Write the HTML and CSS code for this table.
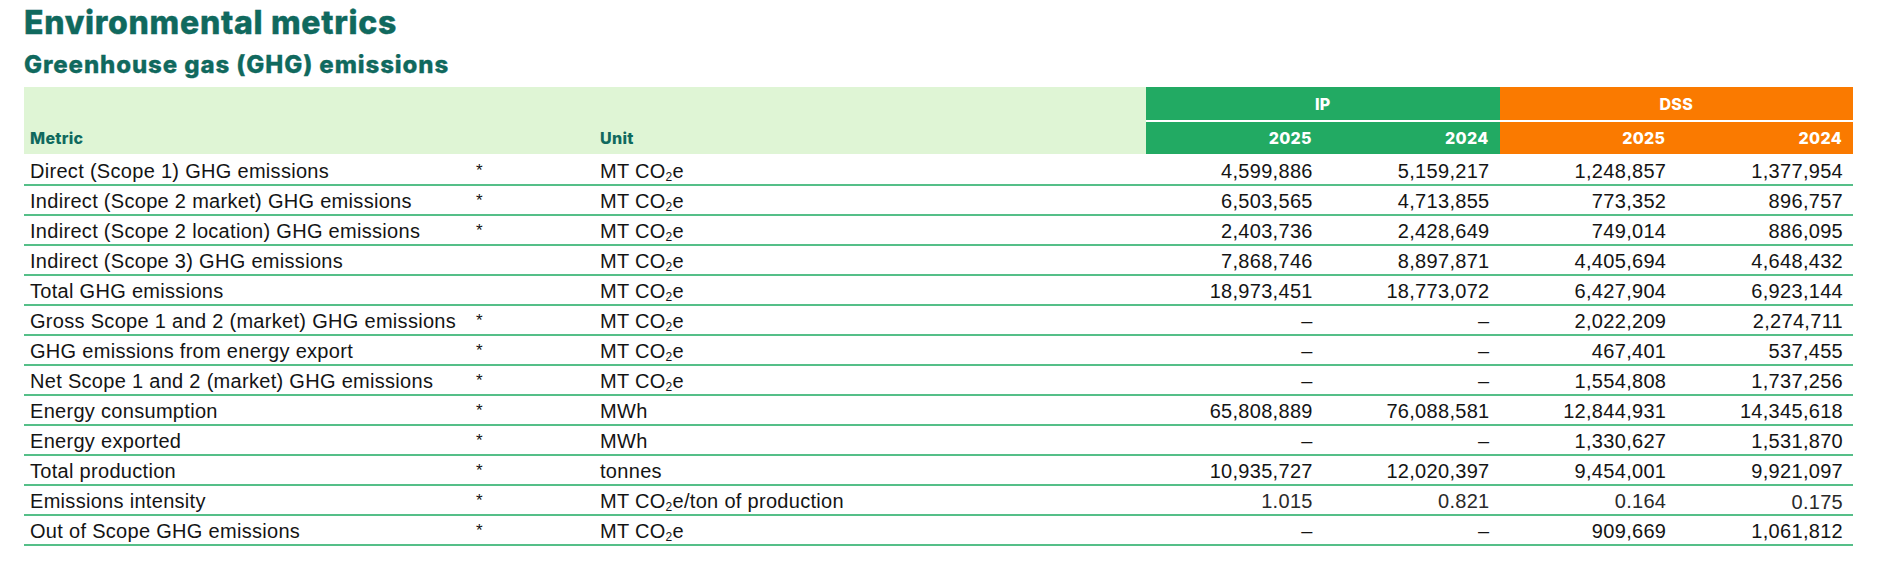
FILE: index.html
```html
<!DOCTYPE html>
<html lang="en">
<head>
<meta charset="utf-8">
<title>Environmental metrics</title>
<link rel="stylesheet" href="styles.css">
</head>
<body>
<main class="page">
  <h1 class="title">Environmental metrics</h1>
  <h2 class="subtitle">Greenhouse gas (GHG) emissions</h2>
  <table class="metrics">
    <colgroup>
      <col class="c-metric">
      <col class="c-star">
      <col class="c-unit">
      <col class="c-val">
      <col class="c-val">
      <col class="c-val">
      <col class="c-val">
    </colgroup>
    <thead>
      <tr class="group-row">
        <th class="lead" colspan="3"></th>
        <th class="grp ip" colspan="2">IP</th>
        <th class="grp dss" colspan="2">DSS</th>
      </tr>
      <tr class="year-row">
        <th class="lead label">Metric</th>
        <th class="lead"></th>
        <th class="lead label">Unit</th>
        <th class="year ip">2025</th>
        <th class="year ip">2024</th>
        <th class="year dss">2025</th>
        <th class="year dss">2024</th>
      </tr>
    </thead>
    <tbody>
      <tr class="first"><td class="m">Direct (Scope 1) GHG emissions</td><td class="s">*</td><td class="u">MT CO<sub>2</sub>e</td><td class="n">4,599,886</td><td class="n">5,159,217</td><td class="n">1,248,857</td><td class="n">1,377,954</td></tr>
      <tr><td class="m">Indirect (Scope 2 market) GHG emissions</td><td class="s">*</td><td class="u">MT CO<sub>2</sub>e</td><td class="n">6,503,565</td><td class="n">4,713,855</td><td class="n">773,352</td><td class="n">896,757</td></tr>
      <tr><td class="m">Indirect (Scope 2 location) GHG emissions</td><td class="s">*</td><td class="u">MT CO<sub>2</sub>e</td><td class="n">2,403,736</td><td class="n">2,428,649</td><td class="n">749,014</td><td class="n">886,095</td></tr>
      <tr><td class="m">Indirect (Scope 3) GHG emissions</td><td class="s"></td><td class="u">MT CO<sub>2</sub>e</td><td class="n">7,868,746</td><td class="n">8,897,871</td><td class="n">4,405,694</td><td class="n">4,648,432</td></tr>
      <tr><td class="m">Total GHG emissions</td><td class="s"></td><td class="u">MT CO<sub>2</sub>e</td><td class="n">18,973,451</td><td class="n">18,773,072</td><td class="n">6,427,904</td><td class="n">6,923,144</td></tr>
      <tr><td class="m">Gross Scope 1 and 2 (market) GHG emissions</td><td class="s">*</td><td class="u">MT CO<sub>2</sub>e</td><td class="n">–</td><td class="n">–</td><td class="n">2,022,209</td><td class="n">2,274,711</td></tr>
      <tr><td class="m">GHG emissions from energy export</td><td class="s">*</td><td class="u">MT CO<sub>2</sub>e</td><td class="n">–</td><td class="n">–</td><td class="n">467,401</td><td class="n">537,455</td></tr>
      <tr><td class="m">Net Scope 1 and 2 (market) GHG emissions</td><td class="s">*</td><td class="u">MT CO<sub>2</sub>e</td><td class="n">–</td><td class="n">–</td><td class="n">1,554,808</td><td class="n">1,737,256</td></tr>
      <tr><td class="m">Energy consumption</td><td class="s">*</td><td class="u">MWh</td><td class="n">65,808,889</td><td class="n">76,088,581</td><td class="n">12,844,931</td><td class="n">14,345,618</td></tr>
      <tr><td class="m">Energy exported</td><td class="s">*</td><td class="u">MWh</td><td class="n">–</td><td class="n">–</td><td class="n">1,330,627</td><td class="n">1,531,870</td></tr>
      <tr><td class="m">Total production</td><td class="s">*</td><td class="u">tonnes</td><td class="n">10,935,727</td><td class="n">12,020,397</td><td class="n">9,454,001</td><td class="n">9,921,097</td></tr>
      <tr><td class="m">Emissions intensity</td><td class="s">*</td><td class="u">MT CO<sub>2</sub>e/ton of production</td><td class="n ratio">1.015</td><td class="n ratio">0.821</td><td class="n ratio">0.164</td><td class="n ratio low">0.175</td></tr>
      <tr><td class="m">Out of Scope GHG emissions</td><td class="s">*</td><td class="u">MT CO<sub>2</sub>e</td><td class="n">–</td><td class="n">–</td><td class="n">909,669</td><td class="n">1,061,812</td></tr>
    </tbody>
  </table>
</main>
</body>
</html>
```

FILE: styles.css
```css
html, body {
  margin: 0;
  padding: 0;
  background: #ffffff;
}

.page {
  padding: 0 27px 0 24px;
}

.title {
  margin: 0;
  padding-top: 3px;
  font-family: Inter, "Liberation Sans", sans-serif;
  font-weight: 800;
  font-size: 32px;
  line-height: 40px;
  letter-spacing: 0.7px;
  color: #10695e;
  -webkit-text-stroke: 0.4px #10695e;
}

.subtitle {
  margin: 8px 0 0;
  font-family: Inter, "Liberation Sans", sans-serif;
  font-weight: 800;
  font-size: 24px;
  line-height: 28px;
  letter-spacing: 0.9px;
  color: #10695e;
  -webkit-text-stroke: 0.3px #10695e;
}

.metrics {
  margin-top: 8px;
  width: 1829px;
  table-layout: fixed;
  border-collapse: separate;
  border-spacing: 0;
  font-family: "Liberation Sans", Arial, sans-serif;
  font-size: 20px;
  letter-spacing: 0.3px;
  color: #141414;
}

.c-metric { width: 446px; }
.c-star { width: 124px; }
.c-unit { width: 552px; }
.c-val { width: 176.75px; }

.metrics th {
  padding: 0;
  font-family: Inter, "Liberation Sans", sans-serif;
  font-weight: 800;
  font-size: 16px;
  letter-spacing: 0.3px;
}

.group-row th {
  height: 33px;
  border-bottom: 2px solid #ffffff;
  text-align: center;
  color: #ffffff;
}

.year-row th {
  height: 32px;
  text-align: right;
  padding-right: 11px;
  color: #ffffff;
}

.metrics th.lead {
  background: #dff5d5;
  border-bottom-color: #dff5d5;
  text-align: left;
  padding: 0 0 0 6px;
}

.metrics th.label {
  color: #10695e;
}

.ip { background: #22aa63; }
.dss { background: #fa7a00; }

.metrics td {
  padding: 2px 0 0;
  line-height: 26px;
  border-bottom: 2px solid #55bf88;
  white-space: nowrap;
}

.metrics tr.first td {
  padding-top: 4px;
}

.metrics td.m,
.metrics td.u {
  padding-left: 6px;
}

.metrics td.s {
  padding-left: 6px;
  font-size: 17px;
  vertical-align: top;
}

.metrics td.n {
  text-align: right;
  padding-right: 10px;
}

.metrics td.ratio {
  color: #2a2a2a;
}

.metrics td.low {
  padding-top: 5px;
  line-height: 23px;
}

.metrics sub {
  font-size: 12px;
  line-height: 0;
  vertical-align: -3px;
}
```
